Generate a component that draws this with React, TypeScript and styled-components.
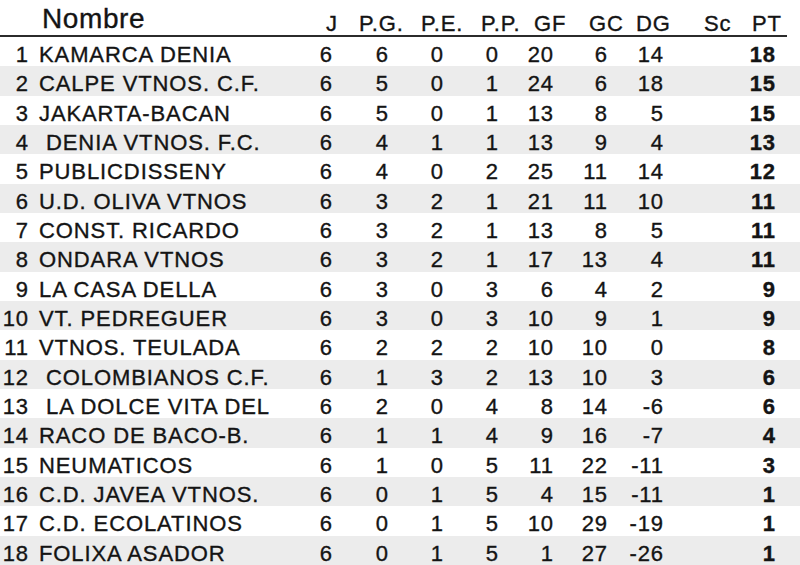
import React from 'react'
import styled, { createGlobalStyle } from 'styled-components'

const GlobalStyle = createGlobalStyle`
  html, body {
    margin: 0;
    padding: 0;
    background: #ffffff;
  }
  body {
    font-family: "Liberation Sans", Arial, Helvetica, sans-serif;
    color: #141414;
    -webkit-text-stroke: 0.35px #141414;
  }
`

// shared column template: right edges of the numeric columns line up with the picture
const bodyColumns = '29px 272px 33px 56px 55px 55px 55px 54px 56px 57px 55px 1fr'
const headColumns = '284px 33px 62px 60px 53px 55px 47px 68px 48px 1fr'

const Sheet = styled.div`
  width: 800px;
  height: 565px;
  overflow: hidden;
  background: #fff;
`

const HeaderRow = styled.div`
  display: grid;
  grid-template-columns: ${headColumns};
  box-sizing: border-box;
  width: 787px;
  height: 37px;
  padding-left: 42px;
  border-bottom: 2px solid #2b2b2b;
`

const HeadCell = styled.div<{ big?: boolean }>`
  font-size: ${({ big }) => (big ? '28px' : '22px')};
  letter-spacing: ${({ big }) => (big ? '0.6px' : '0.9px')};
  line-height: 25px;
  padding-top: ${({ big }) => (big ? '6px' : '11px')};
  white-space: nowrap;
`

const Row = styled.div<{ shaded: boolean }>`
  display: grid;
  grid-template-columns: ${bodyColumns};
  height: 29.33px;
  box-sizing: border-box;
  padding-top: 6px;
  background: ${({ shaded }) => (shaded ? '#ececec' : '#ffffff')};
  font-size: 22px;
  line-height: 23.33px;
  letter-spacing: 0.9px;
`

const Pos = styled.div`
  text-align: right;
`

const Name = styled.div`
  padding-left: 10px;
  white-space: pre;
`

const Num = styled.div<{ strong?: boolean }>`
  text-align: right;
  padding-right: 1px;
  font-weight: ${({ strong }) => (strong ? 700 : 400)};
`

type Team = [string, number, number, number, number, number, number, number, number]

const teams: Team[] = [
  ['KAMARCA DENIA', 6, 6, 0, 0, 20, 6, 14, 18],
  ['CALPE VTNOS. C.F.', 6, 5, 0, 1, 24, 6, 18, 15],
  ['JAKARTA-BACAN', 6, 5, 0, 1, 13, 8, 5, 15],
  [' DENIA VTNOS. F.C.', 6, 4, 1, 1, 13, 9, 4, 13],
  ['PUBLICDISSENY', 6, 4, 0, 2, 25, 11, 14, 12],
  ['U.D. OLIVA VTNOS', 6, 3, 2, 1, 21, 11, 10, 11],
  ['CONST. RICARDO', 6, 3, 2, 1, 13, 8, 5, 11],
  ['ONDARA VTNOS', 6, 3, 2, 1, 17, 13, 4, 11],
  ['LA CASA DELLA', 6, 3, 0, 3, 6, 4, 2, 9],
  ['VT. PEDREGUER', 6, 3, 0, 3, 10, 9, 1, 9],
  ['VTNOS. TEULADA', 6, 2, 2, 2, 10, 10, 0, 8],
  [' COLOMBIANOS C.F.', 6, 1, 3, 2, 13, 10, 3, 6],
  [' LA DOLCE VITA DEL', 6, 2, 0, 4, 8, 14, -6, 6],
  ['RACO DE BACO-B.', 6, 1, 1, 4, 9, 16, -7, 4],
  ['NEUMATICOS', 6, 1, 0, 5, 11, 22, -11, 3],
  ['C.D. JAVEA VTNOS.', 6, 0, 1, 5, 4, 15, -11, 1],
  ['C.D. ECOLATINOS', 6, 0, 1, 5, 10, 29, -19, 1],
  ['FOLIXA ASADOR', 6, 0, 1, 5, 1, 27, -26, 1],
]

const headings = ['J', 'P.G.', 'P.E.', 'P.P.', 'GF', 'GC', 'DG', 'Sc', 'PT']

export default function App() {
  return (
    <Sheet>
      <GlobalStyle />
      <HeaderRow>
        <HeadCell big>Nombre</HeadCell>
        {headings.map(h => (
          <HeadCell key={h}>{h}</HeadCell>
        ))}
      </HeaderRow>
      {teams.map(([name, j, pg, pe, pp, gf, gc, dg, pt], i) => (
        <Row key={i} shaded={i % 2 === 1}>
          <Pos>{i + 1}</Pos>
          <Name>{name}</Name>
          <Num>{j}</Num>
          <Num>{pg}</Num>
          <Num>{pe}</Num>
          <Num>{pp}</Num>
          <Num>{gf}</Num>
          <Num>{gc}</Num>
          <Num>{dg}</Num>
          <Num />
          <Num strong>{pt}</Num>
        </Row>
      ))}
    </Sheet>
  )
}
